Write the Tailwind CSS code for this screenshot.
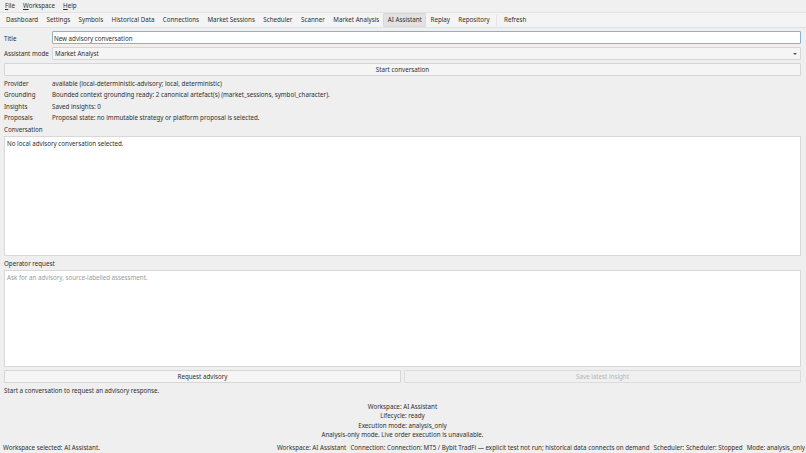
<!DOCTYPE html>
<html lang="en">
<head>
    <meta charset="UTF-8">
    <title>AI Assistant</title>
    <script src="https://cdn.jsdelivr.net/npm/@tailwindcss/browser@4"></script>
</head>
<body class="w-[806px] h-[453px] overflow-hidden bg-[#efefef] text-[#2e2e2e] font-['Noto_Sans',sans-serif] text-[6.22px] leading-[10px] flex flex-col">
    <!-- menu bar -->
    <div class="h-[12px] flex items-center gap-[8px] pl-[5px] bg-[#f0f0f0]">
        <span><u>F</u>ile</span>
        <span><u>W</u>orkspace</span>
        <span><u>H</u>elp</span>
    </div>

    <!-- workspace tabs -->
    <div class="h-[16px] flex items-center pl-[1.8px] bg-[#f4f4f4] border-t border-b border-[#e2e2e2]">
        <span class="px-[4.2px]">Dashboard</span>
        <span class="px-[4.2px]">Settings</span>
        <span class="px-[4.2px]">Symbols</span>
        <span class="px-[4.2px]">Historical Data</span>
        <span class="px-[4.2px]">Connections</span>
        <span class="px-[4.2px]">Market Sessions</span>
        <span class="px-[4.2px]">Scheduler</span>
        <span class="px-[4.5px]">Scanner</span>
        <span class="px-[4px]">Market Analysis</span>
        <span class="px-[3.5px] h-[14px] flex items-center bg-[#e2e2e2] border border-[#d8d8d8] rounded-[1px]">AI Assistant</span>
        <span class="px-[4.2px]">Replay</span>
        <span class="px-[4.2px]">Repository</span>
        <span class="w-px h-[11px] ml-[2px] mr-[3px] bg-[#e6e6e6]"></span>
        <span class="px-[4.2px]">Refresh</span>
    </div>

    <!-- main form -->
    <div class="flex-1 flex flex-col pl-[4px] pr-[5px] pt-[3px]">
        <div class="flex items-center h-[13px] mb-[3px]">
            <span class="w-[48px] pt-[2px]">Title</span>
            <div class="flex-1 h-full flex items-center pl-[1px] pt-[2px] bg-white border border-[#8fb0c9] rounded-[1px]">New advisory conversation</div>
        </div>
        <div class="flex items-center h-[13px] mb-[3px]">
            <span class="w-[48px] pt-[1px] whitespace-nowrap">Assistant mode</span>
            <div class="flex-1 h-full flex items-center justify-between pl-[2px] pr-[3px] pt-[1px] bg-[#f5f5f5] border border-[#d6d6d6] rounded-[1px]">
                <span>Market Analyst</span>
                <span class="w-0 h-0 border-l-[2px] border-r-[2px] border-t-[2px] border-l-transparent border-r-transparent border-t-[#555]"></span>
            </div>
        </div>
        <div class="h-[13px] flex items-center justify-center pt-[1px] bg-[#f5f5f5] border border-[#d6d6d6] rounded-[1px]">Start conversation</div>

        <div class="mt-[2px] grid grid-cols-[48px_1fr] auto-rows-[11.5px] items-center">
            <span>Provider</span><span>available (local-deterministic-advisory; local, deterministic)</span>
            <span>Grounding</span><span>Bounded context grounding ready: 2 canonical artefact(s) (market_sessions, symbol_character).</span>
            <span>Insights</span><span>Saved insights: 0</span>
            <span>Proposals</span><span>Proposal state: no immutable strategy or platform proposal is selected.</span>
            <span class="whitespace-nowrap">Conversation</span><span></span>
        </div>

        <div class="h-[120px] px-[2px] py-[2px] bg-white border border-[#d8d8d8]">No local advisory conversation selected.</div>
        <div class="h-[14px] pt-[2px] flex items-center">Operator request</div>
        <div class="h-[97px] px-[2px] py-[2px] bg-white border border-[#d8d8d8] text-[#9a9a9a]">Ask for an advisory, source-labelled assessment.</div>

        <div class="mt-[3px] h-[13px] grid grid-cols-2 gap-[3px]">
            <div class="flex items-center justify-center pt-[1px] bg-[#f5f5f5] border border-[#d6d6d6] rounded-[1px]">Request advisory</div>
            <div class="flex items-center justify-center pt-[1px] bg-[#f0f0f0] border border-[#dcdcdc] rounded-[1px] text-[#b4b4b4]">Save latest insight</div>
        </div>
        <div class="h-[14px] pt-[2px] flex items-center">Start a conversation to request an advisory response.</div>

        <div class="mt-[5px] flex flex-col items-center leading-[9.6px]">
            <span>Workspace: AI Assistant</span>
            <span>Lifecycle: ready</span>
            <span>Execution mode: analysis_only</span>
            <span>Analysis-only mode. Live order execution is unavailable.</span>
        </div>
    </div>

    <!-- status bar -->
    <div class="h-[10px] flex items-center justify-between pl-[3px] pr-[1px] whitespace-nowrap">
        <span>Workspace selected: AI Assistant.</span>
        <span class="flex gap-[4px]">
            <span>Workspace: AI Assistant</span>
            <span>Connection: Connection: MT5 / Bybit TradFi — explicit test not run; historical data connects on demand</span>
            <span>Scheduler: Scheduler: Stopped</span>
            <span>Mode: analysis_only</span>
        </span>
    </div>
</body>
</html>
